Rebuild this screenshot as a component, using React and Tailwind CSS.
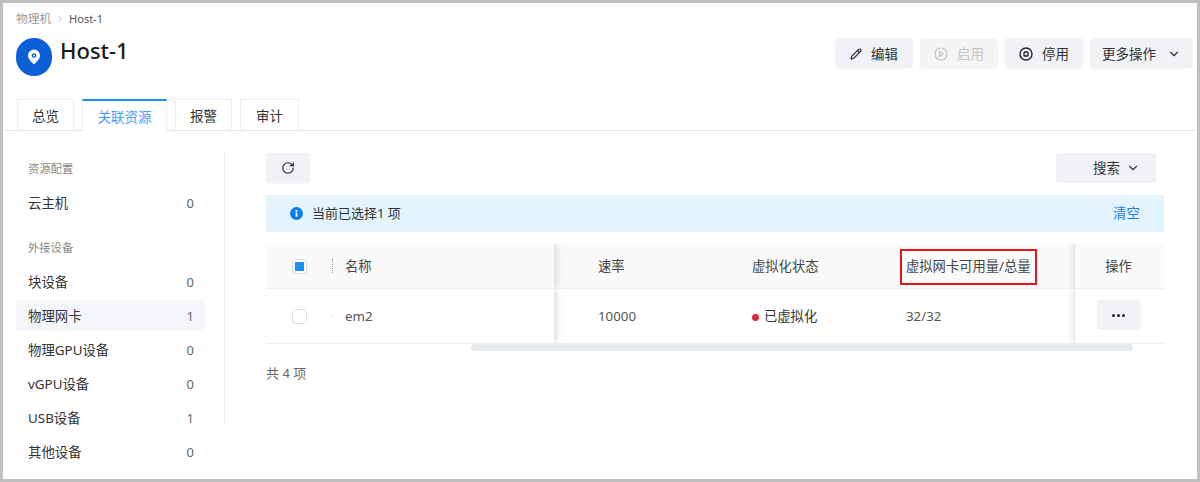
import { ChevronDown, ChevronRight, Pencil, RotateCw } from "lucide-react";

const font = { fontFamily: '"Noto Sans", "Noto Sans CJK SC", sans-serif' };

const HeaderButton = ({ children, width, disabled }) => (
  <button
    className={`h-[30px] pt-[2px] flex items-center justify-center gap-[9px] rounded-sm text-[13.5px] shadow-[0_1px_2px_rgba(0,0,0,0.04)] ${width} ${
      disabled ? "bg-[#f5f5f5] text-[#c4c4c4]" : "bg-[#f0f2f5] text-[#333333]"
    }`}
  >
    {children}
  </button>
);

const Tab = ({ label, active, width }) => (
  <div
    className={`flex items-center justify-center pt-[2px] border border-[#eeeeee] border-b-0 text-[13.5px] ${width} ${
      active
        ? "border-t-2 border-t-[#1890ff] text-[#4a9dff] bg-white h-[32px] -mb-px"
        : "h-[31px] text-[#333333]"
    }`}
  >
    {label}
  </div>
);

const SideItem = ({ label, count, active }) => (
  <div
    className={`h-[31px] mb-[3px] pl-3 pr-[11px] pt-[2px] flex items-center justify-between text-[13.4px] ${
      active ? "bg-[#f5f6fa]" : ""
    }`}
  >
    <span className="text-[#333333]">{label}</span>
    <span className="text-[#666666] text-[13px]">{count}</span>
  </div>
);

export default function App() {
  return (
    <div style={font} className="w-[1200px] h-[482px] border-[3px] border-[#c0c0c0] bg-white overflow-hidden">
      <div className="h-[128px] border-b border-[#e8e8e8] flex flex-col">
        <div className="pl-[13px] pt-[7px] h-[25px] flex items-center gap-[4px] text-[11.7px]">
          <span className="text-[#999999]">物理机</span>
          <ChevronRight size={10} className="text-[#bbbbbb]" />
          <span className="text-[#555555] text-[11px]">Host-1</span>
        </div>
        <div className="pl-[13px] pr-[4px] flex justify-between">
          <div className="flex items-start gap-2">
            <div className="w-9 h-[38px] mt-[10px] rounded-full bg-[#0b5fd7] flex items-center justify-center">
              <svg width="14" height="16" viewBox="0 0 14 16">
                <path d="M7 0.5a6 6 0 0 1 6 6c0 3.4-3.5 6.6-6 9-2.500-2.400-6-5.600-6-9a6 6 0 0 1 6-6z" fill="#ffffff" />
                <circle cx="7" cy="6.500" r="2.300" fill="#0b5fd7" />
                <circle cx="7" cy="6.500" r="1" fill="#ffffff" />
              </svg>
            </div>
            <h1 className="text-[22px] leading-[30px] mt-[7px] font-medium text-[#1a1a1a]">Host-1</h1>
          </div>
          <div className="flex gap-[7px] mt-[10px]">
            <HeaderButton width="w-[78px]">
              <Pencil size={12} strokeWidth={2.2} className="text-[#222222]" />
              编辑
            </HeaderButton>
            <HeaderButton width="w-[78px]" disabled>
              <svg width="14" height="14" viewBox="0 0 14 14" fill="none" stroke="#c4c4c4" strokeWidth="1.200">
                <circle cx="7" cy="7" r="6" />
                <path d="M5.500 4.500l3.500 2.500-3.500 2.500z" />
              </svg>
              启用
            </HeaderButton>
            <HeaderButton width="w-[78px]">
              <svg width="14" height="14" viewBox="0 0 14 14" fill="none" stroke="#222222" strokeWidth="1.400">
                <circle cx="7" cy="7" r="6" />
                <rect x="5" y="5" width="4" height="4" rx="0.800" />
              </svg>
              停用
            </HeaderButton>
            <HeaderButton width="w-[103px]">
              更多操作
              <ChevronDown size={14} className="ml-[2px] text-[#333333]" />
            </HeaderButton>
          </div>
        </div>
        <div className="mt-auto pl-[14px] flex items-end gap-2">
          <Tab label="总览" width="w-[57px]" />
          <Tab label="关联资源" width="w-[85px]" active />
          <Tab label="报警" width="w-[57px]" />
          <Tab label="审计" width="w-[59px]" />
        </div>
      </div>

      <div className="flex">
        <aside className="w-[222px] pl-[13px] pt-[21px]">
          <div className="w-[209px] h-[272px] pr-[19px] border-r border-[#f0f0f0]">
            <div className="pl-3 h-[35px] text-[11.3px] leading-[34px] text-[#888888]">资源配置</div>
            <SideItem label="云主机" count="0" />
            <div className="pl-3 h-[35px] mt-[13px] text-[11.3px] leading-[34px] text-[#888888]">外接设备</div>
            <SideItem label="块设备" count="0" />
            <SideItem label="物理网卡" count="1" active />
            <SideItem label="物理GPU设备" count="0" />
            <SideItem label="vGPU设备" count="0" />
            <SideItem label="USB设备" count="1" />
            <SideItem label="其他设备" count="0" />
          </div>
        </aside>

        <main className="w-[898px] ml-[41px] pt-[22px]">
          <div className="pr-2 flex justify-between">
            <button className="w-11 h-[30px] rounded-sm bg-[#f0f2f5] flex items-center justify-center shadow-[0_1px_2px_rgba(0,0,0,0.04)]">
              <RotateCw size={14} strokeWidth={2} className="text-[#222222]" />
            </button>
            <button className="w-[100px] h-[30px] pl-[37px] rounded-sm bg-[#f0f2f5] flex items-center gap-[6px] text-[13.5px] text-[#333333]">
              搜索
              <ChevronDown size={14} />
            </button>
          </div>

          <div className="mt-3 h-[37px] pl-6 pr-6 bg-[#e3f4fe] flex items-center text-[13px] text-[#333333]">
            <svg width="13" height="13" viewBox="0 0 14 14" className="mr-[9px]">
              <circle cx="7" cy="7" r="7" fill="#0a7cf0" />
              <rect x="6" y="6" width="2" height="4.500" fill="#ffffff" />
              <rect x="6" y="3.300" width="2" height="1.800" fill="#ffffff" />
            </svg>
            当前已选择1 项
            <span className="ml-auto text-[13.5px] text-[#1f7fe6]">清空</span>
          </div>

          <div className="relative mt-3">
            <div className="h-[45px] flex items-center overflow-hidden bg-[#fafafa] border-b border-[#eeeeee] text-[13.3px] text-[#444444]">
              <div className="w-[289px] h-full flex items-center border-r border-[#e4e4e4] shadow-[3px_0_5px_rgba(0,0,0,0.09)]">
                <div className="ml-[26px] w-[15px] h-[15px] border border-[#dddddd] rounded-sm bg-white flex items-center justify-center">
                  <div className="w-[9px] h-[9px] bg-[#1890ff]" />
                </div>
                <div className="ml-[25px] h-[14px] border-l border-dotted border-[#999999]" />
                <span className="ml-3 pt-[2px]">名称</span>
              </div>
              <div className="w-[197px] pl-[43px] pt-[2px]">速率</div>
              <div className="w-[154px] pt-[2px]">虚拟化状态</div>
              <div className="w-[168px] flex pt-[2px]">
                <span className="relative">
                  虚拟网卡可用量/总量
                  <span className="absolute -left-[6px] -right-[6px] -top-[8px] -bottom-[8px] border-2 border-[#e8141c]" />
                </span>
              </div>
              <div className="w-[90px] h-full flex items-center justify-center pt-[2px] pr-[2px] border-l border-[#e4e4e4] shadow-[-3px_0_5px_rgba(0,0,0,0.07)]">操作</div>
            </div>
            <div className="h-[55px] flex items-center overflow-hidden border-b border-[#eeeeee] text-[13.3px] text-[#555555]">
              <div className="w-[289px] h-full flex items-center border-r border-[#e4e4e4] shadow-[3px_0_5px_rgba(0,0,0,0.09)]">
                <div className="ml-[26px] w-[15px] h-[15px] border border-[#dddddd] rounded-sm bg-white" />
                <div className="ml-[25px] h-[3px] border-l border-[#d5ecf8]" />
                <span className="ml-3 pt-[2px]">em2</span>
              </div>
              <div className="w-[197px] pl-[43px] pt-[2px]">10000</div>
              <div className="w-[154px] flex items-center gap-[5px] pt-[2px] text-[#333333]">
                <span className="w-[7px] h-[7px] rounded-full bg-[#e0263c]" />
                已虚拟化
              </div>
              <div className="w-[168px] pt-[2px]">32/32</div>
              <div className="w-[90px] h-full flex items-center justify-center pr-[2px] pb-[2px] border-l border-[#e4e4e4] shadow-[-3px_0_5px_rgba(0,0,0,0.07)]">
                <button className="w-11 h-[30px] rounded-sm bg-[#f0f2f5] flex items-center justify-center gap-[2px]">
                  <span className="w-[3px] h-[3px] rounded-full bg-[#222222]" />
                  <span className="w-[3px] h-[3px] rounded-full bg-[#222222]" />
                  <span className="w-[3px] h-[3px] rounded-full bg-[#222222]" />
                </button>
              </div>
            </div>
            <div className="absolute left-[205px] top-[100px] w-[662px] h-[7px] rounded-full bg-[#e8ebee]" />
          </div>

          <div className="mt-[20px] text-[13px] text-[#666666]">共 4 项</div>
        </main>
      </div>
    </div>
  );
}
